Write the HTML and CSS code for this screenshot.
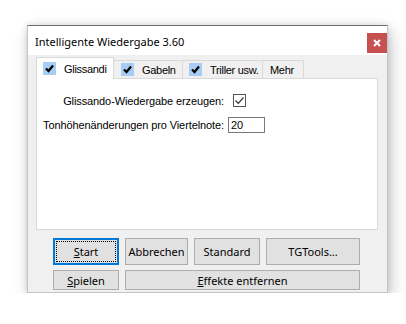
FILE: index.html
```html
<!DOCTYPE html>
<html lang="de">
<head>
  <meta charset="UTF-8">
  <title>Intelligente Wiedergabe 3.60</title>
  <link rel="stylesheet" href="styles.css">
</head>
<body>

<div class="window">
  <div class="titlebar">
    <span class="title">Intelligente Wiedergabe 3.60</span>
    <button class="close" title="Schließen">
      <svg width="8" height="8" viewBox="0 0 8 8"><path d="M1 1 L7 7 M7 1 L1 7" stroke="#fff" stroke-width="2"/></svg>
    </button>
  </div>

  <div class="body">
    <!-- Tabs -->
    <div class="tabs">
      <div class="tab active tab-glissandi">
        <span class="tab-check"><svg width="13" height="13" viewBox="0 0 13 13"><rect width="13" height="13" fill="#a7cdf5"/><path d="M3 6.5 L5.5 9 L10 3.5" fill="none" stroke="#000" stroke-width="2.2"/></svg></span>
        Glissandi
      </div>
      <div class="tab tab-gabeln">
        <span class="tab-check"><svg width="13" height="13" viewBox="0 0 13 13"><rect width="13" height="13" fill="#a7cdf5"/><path d="M3 6.5 L5.5 9 L10 3.5" fill="none" stroke="#000" stroke-width="2.2"/></svg></span>
        Gabeln
      </div>
      <div class="tab tab-triller">
        <span class="tab-check"><svg width="13" height="13" viewBox="0 0 13 13"><rect width="13" height="13" fill="#a7cdf5"/><path d="M3 6.5 L5.5 9 L10 3.5" fill="none" stroke="#000" stroke-width="2.2"/></svg></span>
        Triller usw.
      </div>
      <div class="tab tab-mehr">Mehr</div>
    </div>

    <div class="panel">
      <div class="form-row">
        <label class="label">Glissando-Wiedergabe erzeugen:</label>
        <span class="checkbox"><svg width="11" height="11" viewBox="0 0 11 11"><path d="M1.5 5.5 L4.3 8.3 L9.5 2.5" fill="none" stroke="#333" stroke-width="1.2"/></svg></span>
      </div>
      <div class="form-row">
        <label class="label">Tonhöhenänderungen pro Viertelnote:</label>
        <input type="text" class="edit" value="20">
      </div>
    </div>

    <div class="buttons">
      <button class="btn focused"><span class="focus-ring"><u>S</u>tart</span></button>
      <button class="btn">Abbrechen</button>
      <button class="btn">Standard</button>
      <button class="btn">TGTools...</button>
      <button class="btn small"><u>S</u>pielen</button>
      <button class="btn small wide"><u>E</u>ffekte entfernen</button>
    </div>
  </div>
</div>

</body>
</html>
```

FILE: styles.css
```css
body {
  margin: 0;
  background-color: #fff;
  font-family: "Liberation Sans", Arial, sans-serif;
}

.window {
  margin: 25px 0 0 27px;
  width: 359px;
  height: 266px;
  background-color: #f0f0f0;
  border: 1px solid #c4c4c4;
  border-top: 1px solid #6f6f6f;
  box-shadow: 3px 6px 16px rgba(0, 0, 0, 0.22), 0 0 6px rgba(0, 0, 0, 0.12);
  display: flex;
  flex-direction: column;
}

.titlebar {
  height: 29px;
  background-color: #fff;
  display: flex;
  justify-content: space-between;
  align-items: flex-start;
}

.title {
  font-family: "Noto Sans", sans-serif;
  font-size: 11px;
  color: #000;
  margin: 8px 0 0 7px;
}

.close {
  width: 20px;
  height: 20px;
  margin: 7px 0 0 0;
  padding: 0;
  border: none;
  background-color: #c75050;
  display: flex;
  align-items: center;
  justify-content: center;
}

.body {
  flex: 1;
  padding: 2px 0 0 8px;
}

.tabs {
  display: flex;
  align-items: flex-end;
  height: 21px;
  position: relative;
  z-index: 1;
}

.tab {
  box-sizing: border-box;
  height: 18px;
  border: 1px solid #d9d9d9;
  border-bottom: none;
  background-color: #f0f0f0;
  font-size: 11px;
  letter-spacing: -0.3px;
  white-space: nowrap;
  display: flex;
  align-items: center;
  padding-left: 6px;
  margin-left: -1px;
}

.tab.active {
  height: 22px;
  margin-bottom: -1px;
  margin-left: 0;
  background-color: #fff;
  padding-left: 6px;
}

.tab-check {
  display: flex;
  margin-right: 8px;
}

.tab-glissandi { width: 78px; }
.tab-gabeln { width: 70px; padding-left: 7px; }
.tab-triller { width: 81px; }
.tab-mehr { width: 42px; padding-left: 7px; }

.panel {
  box-sizing: border-box;
  width: 342px;
  height: 152px;
  background-color: #fff;
  border: 1px solid #d9d9d9;
  padding-top: 13px;
}

.form-row {
  display: flex;
  align-items: center;
  height: 17px;
  margin-bottom: 7px;
}

.label {
  width: 187px;
  text-align: right;
  font-size: 11px;
  letter-spacing: -0.1px;
  color: #000;
}

.checkbox {
  box-sizing: border-box;
  width: 13px;
  height: 13px;
  border: 1px solid #555;
  margin-left: 9px;
  display: flex;
  align-items: center;
  justify-content: center;
  background-color: #fff;
}

.edit {
  box-sizing: border-box;
  width: 37px;
  height: 16px;
  margin-left: 4px;
  border: 1px solid #7a7a7a;
  padding: 0 2px;
  font-family: "Liberation Sans", Arial, sans-serif;
  font-size: 11px;
  outline: none;
}

.buttons {
  display: grid;
  grid-template-columns: 66px 63px 66px 94px;
  grid-template-rows: 27px 20px;
  column-gap: 6px;
  row-gap: 5px;
  margin: 8px 0 0 17px;
}

.btn {
  box-sizing: border-box;
  background-color: #e1e1e1;
  border: 1px solid #adadad;
  font-family: "Noto Sans", sans-serif;
  font-size: 11px;
  color: #000;
  padding: 0;
}

.btn u {
  text-underline-offset: 1px;
}

.btn.focused {
  border: 2px solid #0078d7;
  padding: 1px;
}

.focus-ring {
  display: flex;
  align-items: center;
  justify-content: center;
  height: 100%;
  box-sizing: border-box;
  border: 1px dotted #000;
}

.btn.wide {
  grid-column: 2 / 5;
}
```
